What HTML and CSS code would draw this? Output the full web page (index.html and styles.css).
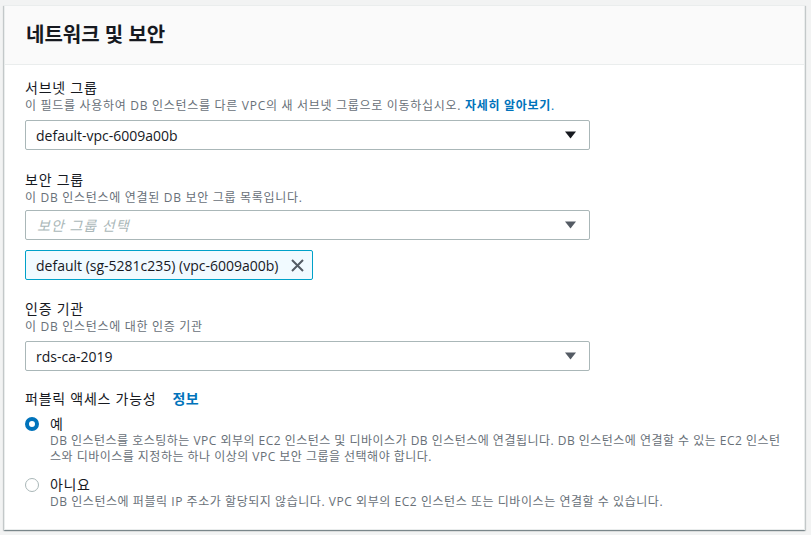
FILE: index.html
```html
<!DOCTYPE html>
<html lang="ko">
<head>
<meta charset="utf-8">
<link rel="stylesheet" href="styles.css">
</head>
<body>
<section class="card">
  <header class="card-header"><h2>네트워크 및 보안</h2></header>
  <div class="card-body">
    <div class="field">
      <div class="label">서브넷 그룹</div>
      <div class="desc">이 필드를 사용하여 DB 인스턴스를 다른 VPC의 새 서브넷 그룹으로 이동하십시오. <a class="link">자세히 알아보기</a><span class="link-dot">.</span></div>
      <div class="select">
        <span class="value">default-vpc-6009a00b</span>
        <svg class="caret dark" width="11" height="8" viewBox="0 0 11 8"><path d="M0 0.5h11L5.5 7.5z" fill="currentColor"/></svg>
      </div>
    </div>
    <div class="field tight">
      <div class="label">보안 그룹</div>
      <div class="desc">이 DB 인스턴스에 연결된 DB 보안 그룹 목록입니다.</div>
      <div class="select close">
        <span class="placeholder">보안 그룹 선택</span>
        <svg class="caret" width="11" height="8" viewBox="0 0 11 8"><path d="M0 0.5h11L5.5 7.5z" fill="currentColor"/></svg>
      </div>
      <div class="tokens">
        <div class="token">
          <span>default (sg-5281c235) (vpc-6009a00b)</span>
          <svg class="dismiss" width="13" height="13" viewBox="0 0 13 13"><path d="M1 1l11 11M12 1L1 12" stroke="currentColor" stroke-width="2" fill="none"/></svg>
        </div>
      </div>
    </div>
    <div class="field short">
      <div class="label">인증 기관</div>
      <div class="desc">이 DB 인스턴스에 대한 인증 기관</div>
      <div class="select">
        <span class="value">rds-ca-2019</span>
        <svg class="caret" width="11" height="8" viewBox="0 0 11 8"><path d="M0 0.5h11L5.5 7.5z" fill="currentColor"/></svg>
      </div>
    </div>
    <div class="field last">
      <div class="label">퍼블릭 액세스 가능성<a class="info">정보</a></div>
      <div class="radio-group">
        <div class="radio">
          <span class="dot checked"></span>
          <div class="radio-text">
            <div class="radio-label">예</div>
            <div class="desc yes">DB 인스턴스를 호스팅하는 VPC 외부의 EC2 인스턴스 및 디바이스가 DB 인스턴스에 연결됩니다. DB 인스턴스에 연결할 수 있는 EC2 인스턴스와 디바이스를 지정하는 하나 이상의 VPC 보안 그룹을 선택해야 합니다.</div>
          </div>
        </div>
        <div class="radio">
          <span class="dot"></span>
          <div class="radio-text">
            <div class="radio-label">아니요</div>
            <div class="desc no">DB 인스턴스에 퍼블릭 IP 주소가 할당되지 않습니다. VPC 외부의 EC2 인스턴스 또는 디바이스는 연결할 수 있습니다.</div>
          </div>
        </div>
      </div>
    </div>
  </div>
</section>
</body>
</html>
```
FILE: styles.css
```css
* { box-sizing: border-box; }
html, body { margin: 0; padding: 0; }
body {
  background: #f2f3f3;
  font-family: "Open Sans", "Noto Sans CJK KR", sans-serif;
  color: #16191f;
  padding: 5px 6px 0 4px;
  height: 535px;
  overflow: hidden;
}
.card {
  background: #fff;
  border: 1px solid #eaeded;
  box-shadow: 0 1px 1px 0 rgba(0,28,36,.3), 1px 1px 1px 0 rgba(0,28,36,.15), -1px 1px 1px 0 rgba(0,28,36,.15);
  width: 801px;
  height: 525px;
}
.card-header {
  background: #fafafa;
  border-bottom: 1px solid #eaeded;
  height: 59px;
  padding: 0 21px;
  display: flex;
  align-items: center;
}
.card-header h2 {
  margin: 0;
  font-size: 20px;
  font-weight: 700;
  line-height: 26px;
  color: #16191f;
}
.card-body {
  padding: 13px 20px 0 20px;
}
.field { margin-bottom: 20px; }
.field.tight { margin-bottom: 19px; }
.field.short { margin-bottom: 18px; }
.field.last { margin-bottom: 0; }
.label {
  font-size: 14px;
  line-height: 20px;
  color: #16191f;
  letter-spacing: 0.75px;
}
.desc {
  font-size: 12px;
  line-height: 16px;
  color: #687078;
  letter-spacing: 0.7px;
}
.desc.yes { letter-spacing: 0.48px; }
.desc.no { letter-spacing: 0.55px; }
.link { color: #0073bb; font-weight: 700; }
.link-dot { color: #0073bb; }
.info { color: #0073bb; font-weight: 700; margin-left: 16px; letter-spacing: 0.5px; }
.select {
  margin-top: 6px;
  width: 565px;
  height: 30px;
  border: 1px solid #aab7b8;
  border-radius: 2px;
  display: flex;
  align-items: center;
  justify-content: space-between;
  padding: 0 13px 0 10px;
  font-size: 14px;
}
.select.close { margin-top: 4px; }
.value { color: #16191f; }
.placeholder { color: #aab7b8; font-style: italic; padding-left: 1px; letter-spacing: 1px; }
.caret { color: #545b64; }
.caret.dark { color: #16191f; }
.tokens { margin-top: 10px; display: flex; }
.token {
  display: flex;
  align-items: center;
  gap: 13px;
  height: 30px;
  padding: 0 8px 0 10px;
  background: #f1faff;
  border: 1px solid #00a1c9;
  border-radius: 2px;
  font-size: 14px;
  color: #16191f;
}
.dismiss { color: #545b64; }
.radio-group {
  margin-top: 6px;
  display: flex;
  flex-direction: column;
  gap: 11px;
}
.radio { display: flex; align-items: flex-start; }
.dot {
  flex: none;
  width: 14px;
  height: 14px;
  border-radius: 50%;
  border: 1px solid #aab7b8;
  margin-top: 2px;
  margin-right: 11px;
  background: #fff;
}
.dot.checked { border: 4px solid #0073bb; }
.radio-text { flex: 1; }
.radio-label {
  font-size: 14px;
  line-height: 18px;
  color: #16191f;
  letter-spacing: 0.6px;
}
```
